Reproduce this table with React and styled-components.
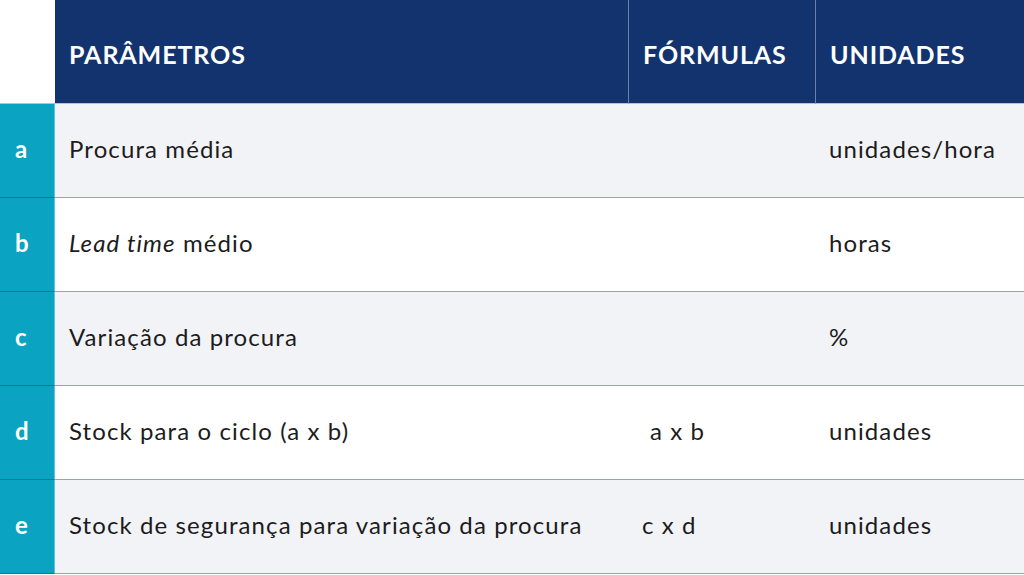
import React from 'react';
import styled, { createGlobalStyle } from 'styled-components';

const GlobalStyle = createGlobalStyle`
  html, body {
    margin: 0;
    padding: 0;
    background: #ffffff;
  }
  body {
    font-family: Lato, "Noto Sans", sans-serif;
  }
`;

const rows = [
  { key: 'a', param: 'Procura média', formula: '', unit: 'unidades/hora' },
  { key: 'b', param: 'Lead time', paramRest: ' médio', italic: true, formula: '', unit: 'horas' },
  { key: 'c', param: 'Variação da procura', formula: '', unit: '%' },
  { key: 'd', param: 'Stock para o ciclo (a x b)', formula: 'a x b', formulaIndent: true, unit: 'unidades' },
  { key: 'e', param: 'Stock de segurança para variação da procura', formula: 'c x d', unit: 'unidades' },
];

const App = () => {
  return (
    <>
      <GlobalStyle />
      <Table>
        <Corner />
        <HeadCell>PARÂMETROS</HeadCell>
        <HeadCell divider>FÓRMULAS</HeadCell>
        <HeadCell divider>UNIDADES</HeadCell>
        {rows.map((row, i) => (
          <React.Fragment key={row.key}>
            <KeyCell>{row.key}</KeyCell>
            <Cell shaded={i % 2 === 0}>
              <span>
                {row.italic ? (
                  <>
                    <em>{row.param}</em>
                    {row.paramRest}
                  </>
                ) : (
                  row.param
                )}
              </span>
            </Cell>
            <Cell shaded={i % 2 === 0} indent={row.formulaIndent}>
              {row.formula}
            </Cell>
            <Cell shaded={i % 2 === 0}>{row.unit}</Cell>
          </React.Fragment>
        ))}
      </Table>
    </>
  );
};

export default App;

const Table = styled.div`
  display: grid;
  grid-template-columns: 55px 573px 187px 209px;
  grid-template-rows: 104px repeat(5, 94px);
  width: 1024px;
  height: 575px;
  background: #ffffff;
`;

const Corner = styled.div`
  background: #ffffff;
  border-bottom: 1px solid #b3bfdb;
`;

const HeadCell = styled.div`
  display: flex;
  align-items: center;
  padding: 4px 0 0 14px;
  background: #13336f;
  color: #ffffff;
  font-weight: 700;
  font-size: 25px;
  letter-spacing: 0.9px;
  border-bottom: 1px solid #b3bfdb;
  border-left: ${(props) => (props.divider ? '1px solid #6a80b0' : 'none')};
  box-sizing: border-box;
`;

const KeyCell = styled.div`
  display: flex;
  align-items: center;
  padding: 0 0 4px 15px;
  background: #0aa3c2;
  color: #ffffff;
  font-weight: 700;
  font-size: 24px;
  border-bottom: 1px solid #1f6e98;
  border-right: 1px solid #5cc2d8;
  box-sizing: border-box;
`;

const Cell = styled.div`
  display: flex;
  align-items: center;
  padding: 0 0 4px ${(props) => (props.indent ? '22px' : '14px')};
  background: ${(props) => (props.shaded ? '#f2f3f7' : '#ffffff')};
  color: #1c1c1c;
  font-size: 24px;
  letter-spacing: 1.1px;
  border-bottom: 1px solid #93a2c5;
  box-sizing: border-box;
  white-space: nowrap;

  em {
    font-style: italic;
  }
`;
